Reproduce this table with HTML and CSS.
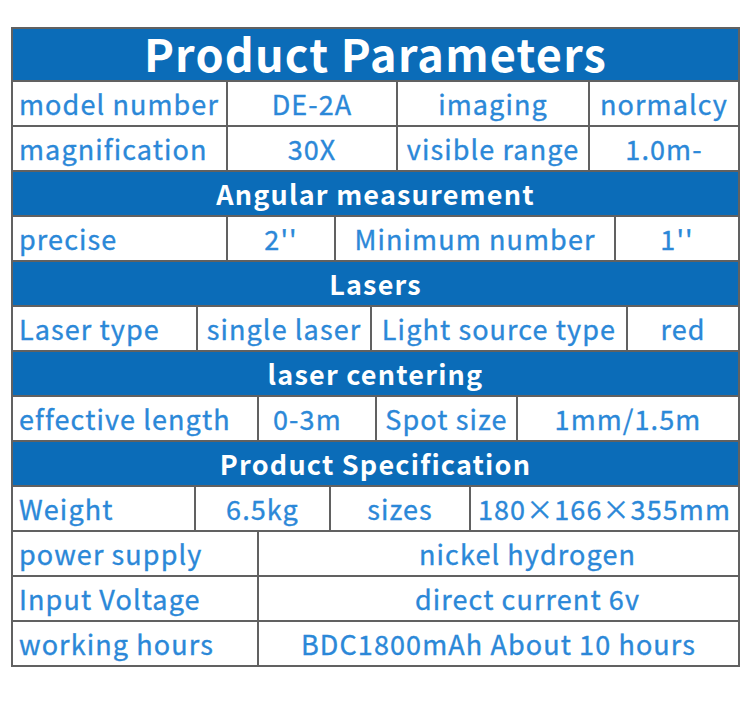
FILE: index.html
```html
<!DOCTYPE html>
<html lang="en">
<head>
<meta charset="utf-8">
<title>Product Parameters</title>
<link rel="stylesheet" href="styles.css">
</head>
<body>
<div class="sheet">
  <div class="row row-title"><div class="cell head title">Product Parameters</div></div>

  <div class="row cols-a">
    <div class="cell label">model number</div>
    <div class="cell">DE-2A</div>
    <div class="cell">imaging</div>
    <div class="cell">normalcy</div>
  </div>
  <div class="row cols-a">
    <div class="cell label">magnification</div>
    <div class="cell">30X</div>
    <div class="cell">visible range</div>
    <div class="cell">1.0m-</div>
  </div>

  <div class="row"><div class="cell head">Angular measurement</div></div>
  <div class="row cols-b">
    <div class="cell label">precise</div>
    <div class="cell">2''</div>
    <div class="cell">Minimum number</div>
    <div class="cell">1''</div>
  </div>

  <div class="row"><div class="cell head">Lasers</div></div>
  <div class="row cols-c">
    <div class="cell label">Laser type</div>
    <div class="cell">single laser</div>
    <div class="cell">Light source type</div>
    <div class="cell">red</div>
  </div>

  <div class="row"><div class="cell head">laser centering</div></div>
  <div class="row cols-d">
    <div class="cell label">effective length</div>
    <div class="cell left-pad">0-3m</div>
    <div class="cell">Spot size</div>
    <div class="cell">1mm/1.5m</div>
  </div>

  <div class="row"><div class="cell head">Product Specification</div></div>
  <div class="row cols-e">
    <div class="cell label">Weight</div>
    <div class="cell">6.5kg</div>
    <div class="cell">sizes</div>
    <div class="cell">180×166×355mm</div>
  </div>
  <div class="row cols-f">
    <div class="cell label">power supply</div>
    <div class="cell shift">nickel hydrogen</div>
  </div>
  <div class="row cols-f">
    <div class="cell label">Input Voltage</div>
    <div class="cell shift">direct current 6v</div>
  </div>
  <div class="row cols-f">
    <div class="cell label">working hours</div>
    <div class="cell">BDC1800mAh About 10 hours</div>
  </div>
</div>
</body>
</html>
```

FILE: styles.css
```css
html, body {
  margin: 0;
  padding: 0;
  background: #ffffff;
}

body {
  padding: 27px 0 0 11px;
  font-family: "Noto Sans CJK SC", "Noto Sans", sans-serif;
}

.sheet {
  width: 725px;
  padding: 2px;
  background: #616161;
  display: flex;
  flex-direction: column;
  gap: 2px;
}

.row {
  display: grid;
  grid-template-columns: 1fr;
  gap: 2px;
  height: 43px;
}

.row-title {
  height: 51px;
}

.cols-a { grid-template-columns: 213px 168px 190px 148px; }
.cols-b { grid-template-columns: 213px 106px 278px 122px; }
.cols-c { grid-template-columns: 183px 172px 254px 110px; }
.cols-d { grid-template-columns: 244px 116px 139px 220px; }
.cols-e { grid-template-columns: 181px 133px 138px 267px; }
.cols-f { grid-template-columns: 244px 479px; }

.cell {
  background: #ffffff;
  color: #2b88d8;
  font-size: 27px;
  font-weight: 400;
  letter-spacing: 1.1px;
  line-height: 43px;
  text-align: center;
  white-space: nowrap;
  -webkit-text-stroke: 0.35px #2b88d8;
}

.label {
  text-align: left;
  padding-left: 6px;
}

.left-pad {
  text-align: left;
  padding-left: 14px;
}

.shift {
  padding-left: 58px;
}

.head {
  background: #0b6cb8;
  color: #ffffff;
  font-weight: 700;
  -webkit-text-stroke: 0;
  letter-spacing: 1.2px;
}

.title {
  font-size: 45px;
  line-height: 48px;
}
```
